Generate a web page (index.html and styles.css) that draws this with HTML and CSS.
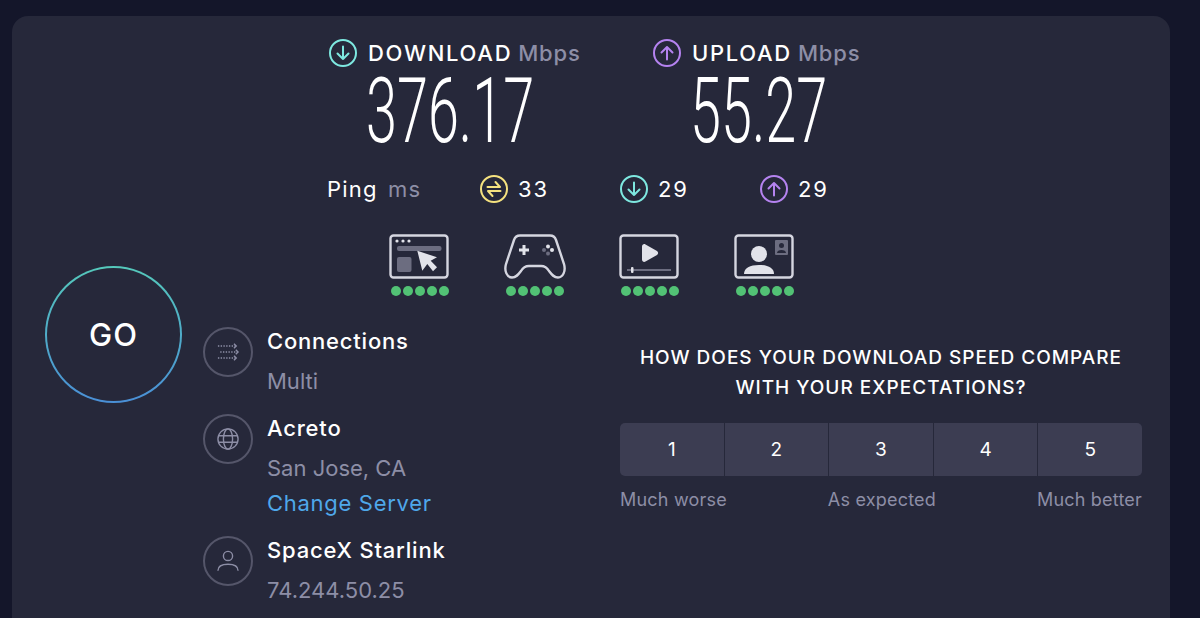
FILE: index.html
```html
<!DOCTYPE html>
<html lang="en">
<head>
  <meta charset="UTF-8">
  <title>Speed Test</title>
  <meta name="viewport" content="width=device-width,initial-scale=1">
  <link rel="stylesheet" href="styles.css">
</head>
<body>
  <main class="card">
    <div class="go-col">
      <button class="go"><span>GO</span></button>
    </div>
    <div class="main-col">
      <!-- Speeds -->
      <section class="speeds">
        <div class="speed speed-down">
          <div class="speed-label">
            <svg class="arrow-icon" viewBox="0 0 30 30"><circle cx="15" cy="15" r="13" stroke="#7ee8e0"/><path d="M15 8.500V21M9.500 15.500 15 21l5.500-5.500" stroke="#7ee8e0"/></svg>
            <span class="speed-name">DOWNLOAD</span><span class="muted">Mbps</span>
          </div>
          <div class="speed-value">376.17</div>
        </div>
        <div class="speed speed-up">
          <div class="speed-label">
            <svg class="arrow-icon" viewBox="0 0 30 30"><circle cx="15" cy="15" r="13" stroke="#b583f0"/><path d="M15 21.500V9M9.500 14.500 15 9l5.500 5.500" stroke="#b583f0"/></svg>
            <span class="speed-name">UPLOAD</span><span class="muted">Mbps</span>
          </div>
          <div class="speed-value">55.27</div>
        </div>
      </section>

      <!-- Ping -->
      <section class="ping">
        <div class="ping-label">Ping <span class="muted">ms</span></div>
        <div class="ping-item">
          <svg class="arrow-icon" viewBox="0 0 30 30"><circle cx="15" cy="15" r="13" stroke="#f5e27f"/><path d="M8.500 13H21L16.500 8M21.500 17H9L13.500 22" stroke="#f5e27f"/></svg>
          <span>33</span>
        </div>
        <div class="ping-item">
          <svg class="arrow-icon" viewBox="0 0 30 30"><circle cx="15" cy="15" r="13" stroke="#7ee8e0"/><path d="M15 8.500V21M9.500 15.500 15 21l5.500-5.500" stroke="#7ee8e0"/></svg>
          <span>29</span>
        </div>
        <div class="ping-item">
          <svg class="arrow-icon" viewBox="0 0 30 30"><circle cx="15" cy="15" r="13" stroke="#b583f0"/><path d="M15 21.500V9M9.500 14.500 15 9l5.500 5.500" stroke="#b583f0"/></svg>
          <span>29</span>
        </div>
      </section>

      <!-- Apps -->
      <section class="apps">
        <div class="app">
          <svg class="app-icon" viewBox="0 0 62 46">
            <rect x="1.500" y="1.500" width="57" height="42" rx="3" class="line"/>
            <circle cx="8" cy="7" r="1.600" class="solid"/><circle cx="14" cy="7" r="1.600" class="solid"/><circle cx="20" cy="7" r="1.600" class="solid"/>
            <rect x="8" y="12" width="44.500" height="5" rx="2" class="dim"/>
            <rect x="8" y="23" width="14.500" height="15" rx="2" class="dim"/>
            <path d="M28.300 16.700 33.300 36.700 38.300 30 44 37.300 48 33.300 41.700 26.700 48 23.300Z" class="solid"/>
          </svg>
          <div class="dots"><i></i><i></i><i></i><i></i><i></i></div>
        </div>
        <div class="app">
          <svg class="app-icon app-icon-wide" viewBox="0 0 64 46">
            <path d="M17 1.500H47C50 1.500 52 3 53 6L61 30C63 37 60 43.500 55 43.500C51 43.500 49 41 46 37C44 33.500 42 32 38 32H26C22 32 20 33.500 18 37C15 41 13 43.500 9 43.500C4 43.500 1 37 3 30L11 6C12 3 14 1.500 17 1.500Z" class="line"/>
            <path d="M19.500 11h3v3.500H26v3h-3.500V21h-3v-3.500H16v-3h3.500Z" class="solid"/>
            <circle cx="45" cy="12.500" r="2" class="solid"/><circle cx="49" cy="16" r="2" class="solid"/><circle cx="41" cy="16" r="2" class="dim"/><circle cx="45" cy="19.500" r="2" class="dim"/>
          </svg>
          <div class="dots"><i></i><i></i><i></i><i></i><i></i></div>
        </div>
        <div class="app">
          <svg class="app-icon" viewBox="0 0 62 46">
            <rect x="1.500" y="1.500" width="57" height="42" rx="3" class="line"/>
            <path d="M23 12.500C23 10.500 25 9.500 26.500 10.500L38 17C39.500 18 39.500 20 38 21L26.500 27.500C25 28.500 23 27.500 23 25.500Z" class="solid"/>
            <rect x="8" y="35" width="44" height="2" class="dim"/>
            <rect x="12" y="33" width="2.500" height="6" rx="1" class="solid"/>
          </svg>
          <div class="dots"><i></i><i></i><i></i><i></i><i></i></div>
        </div>
        <div class="app">
          <svg class="app-icon" viewBox="0 0 62 46">
            <rect x="1.500" y="1.500" width="57" height="42" rx="3" class="line"/>
            <circle cx="25" cy="20" r="8" class="solid"/>
            <path d="M10 40C10 34 16 31 25 31S40 34 40 40Z" class="solid"/>
            <rect x="41" y="6" width="13" height="15" rx="1" class="dim"/>
            <circle cx="47.500" cy="11.500" r="2.500" fill="#26283a"/>
            <path d="M43 19c0-2 2-3 4.500-3s4.500 1 4.500 3Z" fill="#26283a"/>
          </svg>
          <div class="dots"><i></i><i></i><i></i><i></i><i></i></div>
        </div>
      </section>

      <div class="bottom">
        <!-- Connection info -->
        <section class="info">
          <div class="info-row">
            <div class="info-icon">
              <svg viewBox="0 0 24 24"><path d="M1 5.500H21M3.500 12H23M1 18.500H21" stroke-dasharray="1.500 1.500"/><path d="M18.500 3 21 5.500 18.500 8M20.500 9.500 23 12 20.500 14.500M18.500 16 21 18.500 18.500 21"/></svg>
            </div>
            <div>
              <div class="info-title">Connections</div>
              <div class="info-sub">Multi</div>
            </div>
          </div>
          <div class="info-row">
            <div class="info-icon">
              <svg viewBox="0 0 24 24"><circle cx="12" cy="12" r="11"/><ellipse cx="12" cy="12" rx="5" ry="11"/><path d="M1.500 8.500H22.500M1.500 15.500H22.500"/></svg>
            </div>
            <div>
              <div class="info-title">Acreto</div>
              <div class="info-sub">San Jose, CA</div>
              <a class="info-link" href="#">Change Server</a>
            </div>
          </div>
          <div class="info-row">
            <div class="info-icon">
              <svg viewBox="0 0 24 24"><circle cx="12" cy="6.500" r="5"/><path d="M1 22.500C1 18 5.500 15.500 12 15.500S23 18 23 22.500"/></svg>
            </div>
            <div>
              <div class="info-title">SpaceX Starlink</div>
              <div class="info-sub">74.244.50.25</div>
            </div>
          </div>
        </section>

        <!-- Survey -->
        <section class="survey">
          <h2>HOW DOES YOUR DOWNLOAD SPEED COMPARE WITH YOUR EXPECTATIONS?</h2>
          <div class="scale">
            <button>1</button><button>2</button><button>3</button><button>4</button><button>5</button>
          </div>
          <div class="scale-labels">
            <span>Much worse</span><span>As expected</span><span>Much better</span>
          </div>
        </section>
      </div>
    </div>
  </main>
</body>
</html>
```

FILE: styles.css
```css
:root {
  --fondo: #14162a;
  --caja: #26283a;
  --texto: #ffffff;
  --apagado: #8d8ea6;
  --boton: #3c3d52;
  --verde: #52c275;
  --azul: #4fa8ea;
  --linea: #d5d6e0;
}
html, body {
  margin: 0;
  padding: 0;
  height: 618px;
  overflow: hidden;
  background: var(--fondo);
  color: var(--texto);
  font-family: Inter, "Open Sans", Arial, sans-serif;
}
.card {
  box-sizing: border-box;
  width: 1158px;
  height: 602px;
  margin: 16px 0 0 12px;
  background: var(--caja);
  border-radius: 16px 16px 0 0;
  display: flex;
}
.muted { color: var(--apagado); }

/* GO */
.go-col {
  width: 191px;
  flex: none;
  box-sizing: border-box;
  padding: 250px 0 0 33px;
}
.go {
  width: 137px;
  height: 137px;
  padding: 0;
  border: 2px solid transparent;
  border-radius: 50%;
  background: linear-gradient(var(--caja), var(--caja)) padding-box,
              linear-gradient(#55c9bb, #4a8fd6) border-box;
  color: var(--texto);
  font-family: inherit;
  font-size: 31px;
  font-weight: 500;
  letter-spacing: 1px;
  display: flex;
  align-items: center;
  justify-content: center;
}

.main-col { flex: 1; min-width: 0; }

/* Speeds */
.speeds {
  display: flex;
  padding: 22px 0 0 125px;
}
.speed-down { width: 324px; }
.speed-label {
  display: flex;
  align-items: center;
  height: 30px;
  font-size: 22px;
  font-weight: 500;
}
.speed-name {
  letter-spacing: 1.700px;
  margin: 0 6px 0 6px;
}
.speed-label .muted { letter-spacing: .8px; }
.arrow-icon {
  width: 30px;
  height: 30px;
  flex: none;
  fill: none;
  stroke-width: 2;
  stroke-linecap: round;
  stroke-linejoin: round;
  margin-right: 4px;
}
.speed-value {
  width: 260px;
  margin: 2px 0 0 38px;
  height: 84px;
  line-height: 84px;
  font-family: Roboto, Arial, sans-serif;
  font-size: 90px;
  font-weight: 300;
  white-space: nowrap;
  transform: scaleX(.62);
  transform-origin: left center;
}

/* Ping */
.ping {
  display: flex;
  align-items: center;
  height: 30px;
  margin-top: 20px;
  padding-left: 124px;
  font-size: 22px;
  letter-spacing: 1.200px;
}
.ping-label { width: 152px; }
.ping-label .muted { margin-left: 3px; }
.ping-item {
  width: 140px;
  display: flex;
  align-items: center;
  gap: 5px;
  letter-spacing: 1.800px;
}

/* Apps */
.apps {
  display: flex;
  gap: 53px;
  margin-top: 30px;
  padding-left: 186px;
}
.app {
  width: 62px;
  display: flex;
  flex-direction: column;
  align-items: center;
  gap: 6px;
}
.app-icon { width: 62px; height: 46px; display: block; flex: none; }
.app-icon-wide { width: 64px; }
.app-icon .line { fill: none; stroke: var(--linea); stroke-width: 2.400; }
.app-icon .solid { fill: #e2e3ea; }
.app-icon .dim { fill: #6c6d80; }
.dots { display: flex; gap: 2px; }
.dots i {
  width: 10px;
  height: 10px;
  border-radius: 50%;
  background: var(--verde);
}

/* Bottom */
.bottom {
  display: flex;
  margin-top: 30px;
}
.info { width: 417px; flex: none; }
.info-row {
  display: flex;
  gap: 14px;
  margin-bottom: 17px;
}
.info-row:last-child { margin-bottom: 0; }
.info-icon {
  box-sizing: border-box;
  width: 50px;
  height: 50px;
  flex: none;
  margin-top: 1px;
  border: 2px solid #55566a;
  border-radius: 50%;
  display: flex;
  align-items: center;
  justify-content: center;
}
.info-icon svg {
  width: 22px;
  height: 22px;
  fill: none;
  stroke: #8d8ea6;
  stroke-width: 1.500;
}
.info-title {
  font-size: 22px;
  font-weight: 500;
  line-height: 30px;
  letter-spacing: .8px;
}
.info-sub {
  font-size: 22px;
  line-height: 30px;
  margin-top: 10px;
  color: var(--apagado);
}
.info-link {
  display: block;
  margin-top: 5px;
  font-size: 22px;
  line-height: 30px;
  letter-spacing: .7px;
  color: var(--azul);
  text-decoration: none;
}

/* Survey */
.survey {
  width: 522px;
  flex: none;
}
.survey h2 {
  margin: 17px 0 0;
  padding: 0 18px;
  font-size: 19px;
  font-weight: 500;
  line-height: 30px;
  letter-spacing: 1px;
  text-align: center;
}
.scale {
  display: flex;
  gap: 1px;
  margin-top: 20px;
  height: 53px;
  border-radius: 5px;
  overflow: hidden;
}
.scale button {
  flex: 1;
  border: none;
  padding: 0;
  background: var(--boton);
  color: var(--texto);
  font-family: inherit;
  font-size: 19px;
}
.scale-labels {
  display: flex;
  justify-content: space-between;
  margin-top: 12px;
  font-size: 18px;
  line-height: 24px;
  letter-spacing: .2px;
  color: var(--apagado);
}
```
